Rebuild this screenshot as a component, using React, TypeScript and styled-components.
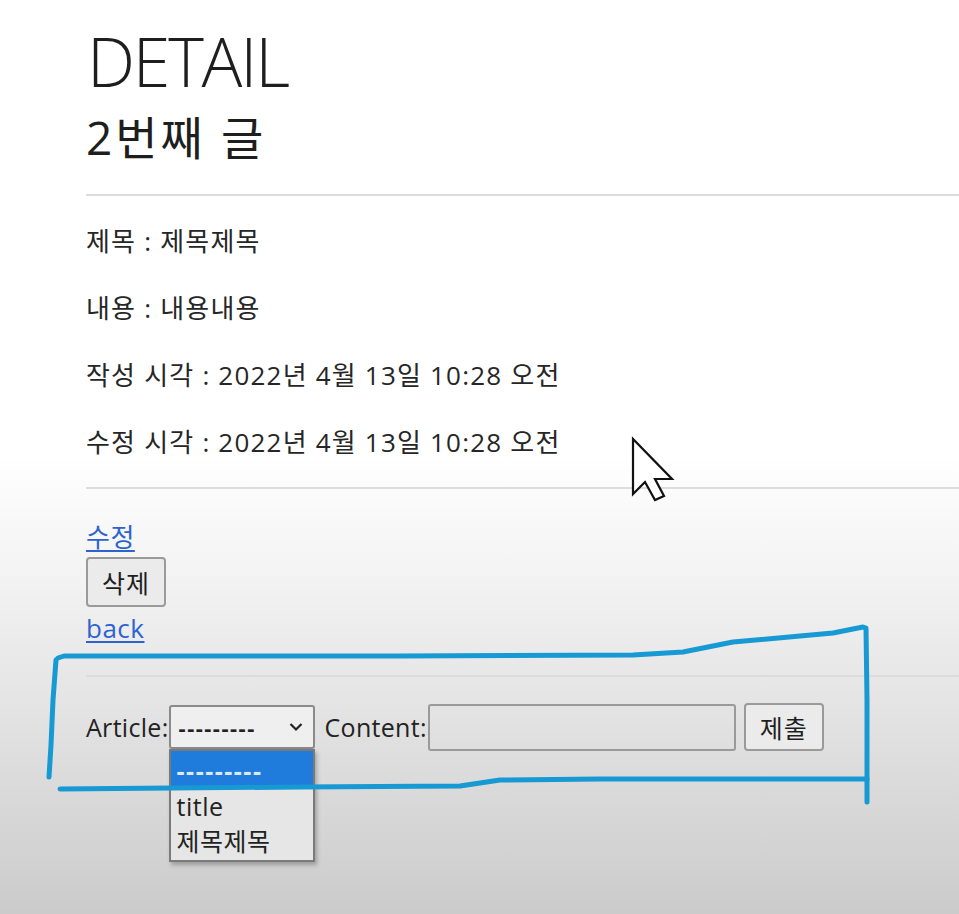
import React from "react";
import styled, { createGlobalStyle } from "styled-components";

const Global = createGlobalStyle`
  html, body { margin: 0; padding: 0; }
  body {
    font-family: "Open Sans", "Noto Sans CJK KR", sans-serif;
    color: #1e1e1e;
  }
`;

const Page = styled.div`
  position: relative;
  width: 959px;
  height: 914px;
  overflow: hidden;
  background: linear-gradient(
    180deg,
    #ffffff 0%,
    #ffffff 50%,
    #f3f3f3 63%,
    #e3e3e3 78%,
    #cbcbcb 100%
  );
`;

const Content = styled.div`
  padding: 20px 0 0 86px;
  display: flex;
  flex-direction: column;
`;

const Title = styled.h1`
  margin: 0 0 0 1px;
  font-size: 68px;
  font-weight: 300;
  line-height: 82px;
  letter-spacing: -2.2px;
`;

const SubTitle = styled.h2`
  margin: 0;
  font-size: 46px;
  font-weight: 400;
  line-height: 70px;
  letter-spacing: 3px;
`;

const Rule = styled.div<{ $top: number; $bottom: number }>`
  height: 2px;
  background: #dcdcdc;
  margin: ${(p) => p.$top}px 0 ${(p) => p.$bottom}px 0;
`;

const Field = styled.p`
  margin: 0;
  height: 67px;
  display: flex;
  align-items: center;
  font-size: 26px;
  line-height: 32px;
  letter-spacing: 1.2px;
  color: #262626;
`;

const TextLink = styled.a<{ $gap?: number }>`
  margin-top: ${(p) => p.$gap ?? 0}px;
  font-size: 26px;
  line-height: 32px;
  letter-spacing: 0.5px;
  color: #2e63cf;
  text-decoration: underline;
  text-underline-offset: 3px;
  cursor: pointer;
  align-self: flex-start;
`;

const GrayButton = styled.button<{ $w: number; $h: number; $gap?: number }>`
  width: ${(p) => p.$w}px;
  height: ${(p) => p.$h}px;
  margin-top: ${(p) => p.$gap ?? 0}px;
  padding: 0;
  font-family: inherit;
  font-size: 25px;
  letter-spacing: 1px;
  color: #1e1e1e;
  background: #ebebeb;
  border: 2px solid #9a9a9a;
  border-radius: 4px;
  align-self: flex-start;
  flex-shrink: 0;
`;

const FormRow = styled.div`
  display: flex;
  align-items: center;
  height: 48px;
  font-size: 25px;
  letter-spacing: 0.3px;
  color: #222;
`;

const Label = styled.span`
  line-height: 30px;
`;

const SelectWrap = styled.div`
  position: relative;
  margin-right: 10px;
`;

const SelectBox = styled.div`
  width: 146px;
  height: 44px;
  box-sizing: border-box;
  border: 2px solid #8a8a8a;
  border-radius: 3px;
  background: #efefef;
  display: flex;
  align-items: center;
  justify-content: space-between;
  padding: 0 10px 0 8px;
  font-weight: 700;
  font-size: 22px;
  letter-spacing: 1.5px;
`;

const Options = styled.div`
  position: absolute;
  left: 0;
  top: 44px;
  width: 146px;
  box-sizing: border-box;
  border: 2px solid #7a7a7a;
  background: #e6e6e6;
  box-shadow: 2px 3px 4px rgba(0, 0, 0, 0.25);
  display: flex;
  flex-direction: column;
  padding-bottom: 3px;
  z-index: 2;
`;

const Option = styled.div<{ $active?: boolean }>`
  height: ${(p) => (p.$active ? 38 : 34)}px;
  display: flex;
  align-items: center;
  padding-left: 6px;
  font-size: 25px;
  color: ${(p) => (p.$active ? "#dce9fb" : "#222")};
  background: ${(p) => (p.$active ? "#1f7bdc" : "transparent")};
  font-weight: ${(p) => (p.$active ? 700 : 400)};
  letter-spacing: ${(p) => (p.$active ? "1.5px" : "0.5px")};
`;

const TextInput = styled.div`
  width: 308px;
  height: 47px;
  box-sizing: border-box;
  border: 2px solid #9a9a9a;
  border-radius: 3px;
  background: transparent;
  margin: 0 8px 0 1px;
`;

const Overlay = styled.svg`
  position: absolute;
  left: 0;
  top: 0;
  pointer-events: none;
  z-index: 5;
`;

export default function App() {
  return (
    <Page>
      <Global />
      <Content>
        <Title>DETAIL</Title>
        <SubTitle>2번째 글</SubTitle>
        <Rule $top={22} $bottom={11} />
        <Field>제목 : 제목제목</Field>
        <Field>내용 : 내용내용</Field>
        <Field>작성 시각 : 2022년 4월 13일 10:28 오전</Field>
        <Field>수정 시각 : 2022년 4월 13일 10:28 오전</Field>
        <Rule $top={12} $bottom={32} />
        <TextLink>수정</TextLink>
        <GrayButton $w={80} $h={50} $gap={4}>
          삭제
        </GrayButton>
        <TextLink $gap={5}>back</TextLink>
        <Rule $top={31} $bottom={26} />
        <FormRow>
          <Label>Article:</Label>
          <SelectWrap>
            <SelectBox>
              <span>---------</span>
              <svg width="14" height="10" viewBox="0 0 14 10">
                <path
                  d="M1.5 2 L7 7.5 L12.5 2"
                  fill="none"
                  stroke="#222"
                  strokeWidth="2.2"
                />
              </svg>
            </SelectBox>
            <Options>
              <Option $active>---------</Option>
              <Option>title</Option>
              <Option>제목제목</Option>
            </Options>
          </SelectWrap>
          <Label>Content:</Label>
          <TextInput />
          <GrayButton $w={80} $h={48}>
            제출
          </GrayButton>
        </FormRow>
      </Content>
      <Overlay width="959" height="914" viewBox="0 0 959 914">
        <path
          d="M58 658 L64 656 L400 656 L633 655 L683 652 L733 642 L800 636 L833 633 L863 627 L866 628 L867 700 L867 802"
          fill="none"
          stroke="#1799d3"
          strokeWidth="5"
          strokeLinecap="round"
          strokeLinejoin="round"
        />
        <path
          d="M56 660 L53 700 L51 745 L49 777"
          fill="none"
          stroke="#1799d3"
          strokeWidth="5"
          strokeLinecap="round"
          strokeLinejoin="round"
        />
        <path
          d="M60 789 L300 787 L460 786 L500 780 L600 779 L867 779"
          fill="none"
          stroke="#1799d3"
          strokeWidth="5"
          strokeLinecap="round"
          strokeLinejoin="round"
        />
        <path
          d="M633 439 L633 494 L645 482 L655 500 L664 496 L655 479 L672 479 Z"
          fill="#ffffff"
          stroke="#111"
          strokeWidth="2.2"
          strokeLinejoin="miter"
        />
      </Overlay>
    </Page>
  );
}
